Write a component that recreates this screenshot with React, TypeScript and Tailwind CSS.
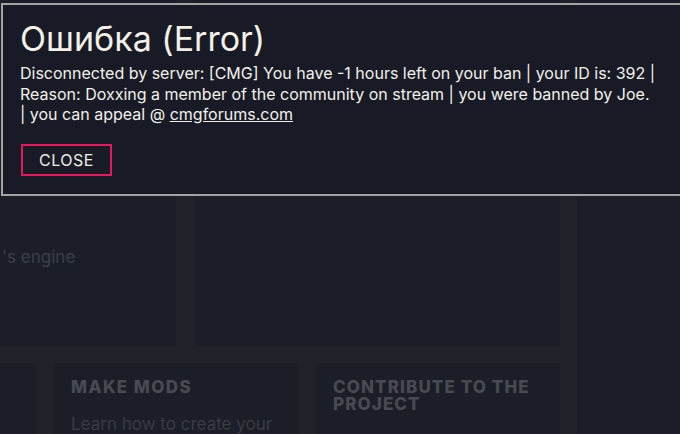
import React from "react";

export default function App() {
  return (
    <div
      className="relative w-[680px] h-[434px] overflow-hidden bg-[#212229]"
      style={{ fontFamily: "Inter, 'Noto Sans', sans-serif" }}
    >
      {/* background page */}
      <div className="flex w-full h-full">
        <div className="flex flex-col w-[560px] gap-[17px]">
          <div className="flex h-[346px] shrink-0 gap-[18px]">
            <div className="w-[176px] bg-[#1b1e27] overflow-hidden">
              <div className="mt-[245px] ml-[2px] whitespace-nowrap text-[17px] text-[#3b3e47]">
                's engine
              </div>
            </div>
            <div className="flex-1 bg-[#1b1e27]"></div>
          </div>
          <div className="flex flex-1 min-h-0 gap-[18px]">
            <div className="w-[36px] bg-[#1b1e27]"></div>
            <div className="w-[244px] bg-[#1b1e27] px-[17px] pt-[16px] overflow-hidden">
              <div className="text-[17px] font-extrabold leading-[17px] tracking-[1.4px] text-[#484a52]">
                MAKE MODS
              </div>
              <div className="mt-[17px] text-[17px] leading-[22px] text-[#393b43] whitespace-nowrap">
                Learn how to create your
              </div>
            </div>
            <div className="flex-1 bg-[#1b1e27] px-[17px] pt-[16px] overflow-hidden">
              <div className="text-[17px] font-extrabold leading-[17px] tracking-[1.1px] text-[#484a52]">
                CONTRIBUTE TO THE PROJECT
              </div>
              <div className="mt-[17px] text-[17px] leading-[22px] text-[#393b43] whitespace-nowrap">
                Learn how you can help
              </div>
            </div>
          </div>
        </div>
        <div className="w-[17px]"></div>
        <div className="flex-1 bg-[#1c1e27]"></div>
      </div>

      {/* modal */}
      <div className="absolute left-[1px] top-[3px] w-[700px] h-[193px] border-2 border-[#a3a3a3] bg-[#181b25] pl-[17px] pt-[14px]">
        <div className="text-[34px] leading-[40px] text-[#f3f1e7] font-normal">
          Ошибка (Error)
        </div>
        <div className="mt-[4px] w-[650px] text-[16px] leading-[20.5px] text-[#f2f1ec]">
          Disconnected by server: [CMG] You have -1 hours left on your ban | your ID is: 392 |
          <br />
          Reason: Doxxing a member of the community on stream | you were banned by Joe.
          <br />| you can appeal @ <span className="underline">cmgforums.com</span>
        </div>
        <div className="mt-[19px] ml-[1px] flex items-center justify-center w-[91px] h-[32px] border-2 border-[#e8175d] text-[16px] tracking-[0.5px] text-[#ecebe6]">
          CLOSE
        </div>
      </div>
    </div>
  );
}
